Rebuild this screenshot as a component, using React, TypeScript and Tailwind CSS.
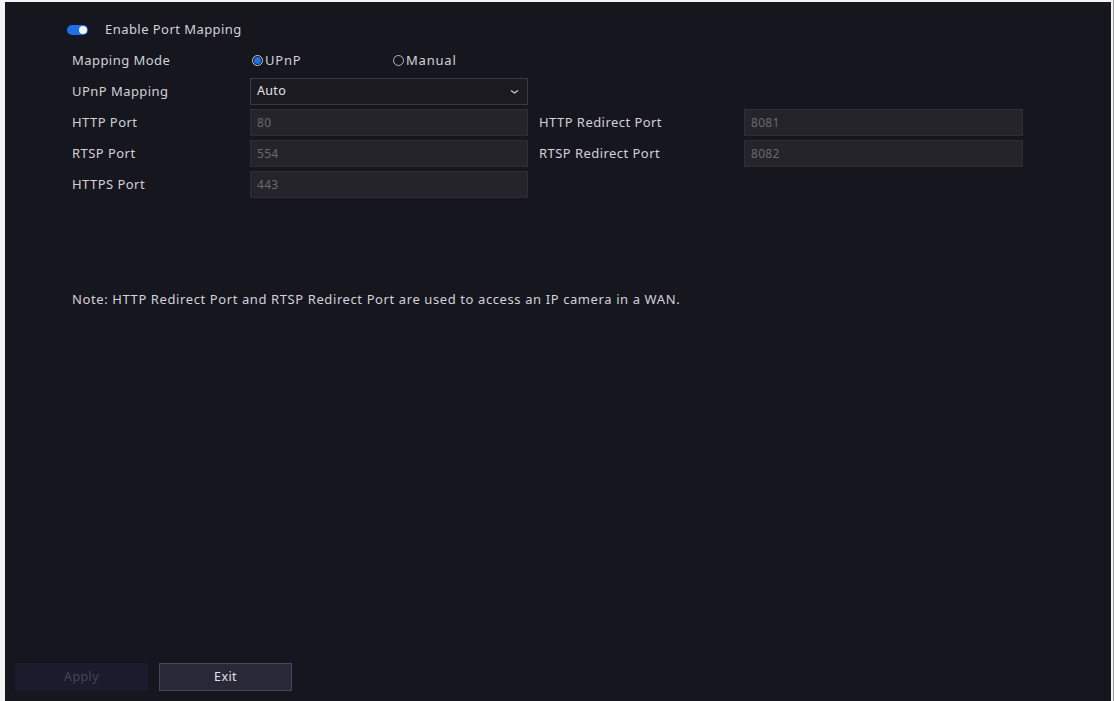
import React, { useState } from 'react';

const font = { fontFamily: '"Noto Sans", "Open Sans", sans-serif' };

const Label = ({ children, w }: { children: React.ReactNode; w: string }) => (
  <div className={`${w} shrink-0 text-[13px] tracking-[0.45px] text-[#d2d2da]`}>{children}</div>
);

const PortInput = ({ value, w }: { value: string; w: string }) => (
  <div className={`${w} h-[27px] shrink-0 flex items-center px-[6px] bg-[#25242b] border border-[#2f2e36] text-[12px] tracking-[0.3px] text-[#6a6970]`}>
    {value}
  </div>
);

const Radio = ({ checked, label }: { checked: boolean; label: string }) => (
  <div className="flex items-center gap-[2px]">
    <span
      className={`w-[11px] h-[11px] rounded-full flex items-center justify-center border ${
        checked ? 'border-[#c9cbd6]' : 'border-[#b6b6be]'
      }`}
    >
      {checked && <span className="w-[7px] h-[7px] rounded-full bg-[#1f6fe6]" />}
    </span>
    <span className="text-[13px] tracking-[0.8px] text-[#d2d2da]">{label}</span>
  </div>
);

export default function App() {
  const [enabled, setEnabled] = useState(true);

  return (
    <div className="w-[1114px] h-[701px] bg-[#f4f4f4] pl-[5px] pt-[2px] pr-[2px] border-r-[1px] border-[#9a9a9a]" style={font}>
      <div className="h-full bg-[#16161e] flex flex-col pt-[14px] pb-[10px]">
        <div className="flex flex-col gap-[4px] pl-[62px]">
          <div className="h-[27px] flex items-center">
            <button
              onClick={() => setEnabled(!enabled)}
              className={`w-[21px] h-[10px] rounded-full flex items-center px-[1px] ${
                enabled ? 'bg-[#1f6fe6] justify-end' : 'bg-[#4a4a52] justify-start'
              }`}
            >
              <span className="w-[8px] h-[8px] rounded-full bg-[#f2f4fa]" />
            </button>
            <span className="ml-[17px] text-[13px] tracking-[0.45px] text-[#d2d2da]">Enable Port Mapping</span>
          </div>

          <div className="h-[27px] flex items-center pl-[5px]">
            <Label w="w-[178px]">Mapping Mode</Label>
            <div className="w-[143px] pl-[2px]">
              <Radio checked label="UPnP" />
            </div>
            <Radio checked={false} label="Manual" />
          </div>

          <div className="h-[27px] flex items-center pl-[5px]">
            <Label w="w-[178px]">UPnP Mapping</Label>
            <div className="w-[278px] h-[27px] flex items-center justify-between px-[6px] bg-[#1b1a21] border border-[#3a3941] text-[12.5px] tracking-[0.3px] text-[#e2e2e6]">
              <span>Auto</span>
              <svg width="9" height="6" viewBox="0 0 9 6" className="mr-[2px]">
                <path d="M1 1.5 L4.5 4 L8 1.5" stroke="#c8c8ce" strokeWidth="1.4" fill="none" />
              </svg>
            </div>
          </div>

          <div className="h-[27px] flex items-center pl-[5px]">
            <Label w="w-[178px]">HTTP Port</Label>
            <PortInput value="80" w="w-[278px]" />
            <div className="ml-[11px]">
              <Label w="w-[205px]">HTTP Redirect Port</Label>
            </div>
            <PortInput value="8081" w="w-[279px]" />
          </div>

          <div className="h-[27px] flex items-center pl-[5px]">
            <Label w="w-[178px]">RTSP Port</Label>
            <PortInput value="554" w="w-[278px]" />
            <div className="ml-[11px]">
              <Label w="w-[205px]">RTSP Redirect Port</Label>
            </div>
            <PortInput value="8082" w="w-[279px]" />
          </div>

          <div className="h-[27px] flex items-center pl-[5px]">
            <Label w="w-[178px]">HTTPS Port</Label>
            <PortInput value="443" w="w-[278px]" />
          </div>
        </div>

        <p className="mt-[92px] pl-[67px] text-[13px] tracking-[0.6px] leading-[18px] text-[#d2d2da]">
          Note: HTTP Redirect Port and RTSP Redirect Port are used to access an IP camera in a WAN.
        </p>

        <div className="mt-auto flex gap-[11px] pl-[10px]">
          <button className="w-[133px] h-[28px] bg-[#1c1a2d] text-[12.5px] tracking-[0.4px] text-[#45435a]">Apply</button>
          <button className="w-[133px] h-[28px] bg-[#292836] border border-[#46455a] text-[12.5px] tracking-[0.4px] text-[#e2e2e8]">
            Exit
          </button>
        </div>
      </div>
    </div>
  );
}
